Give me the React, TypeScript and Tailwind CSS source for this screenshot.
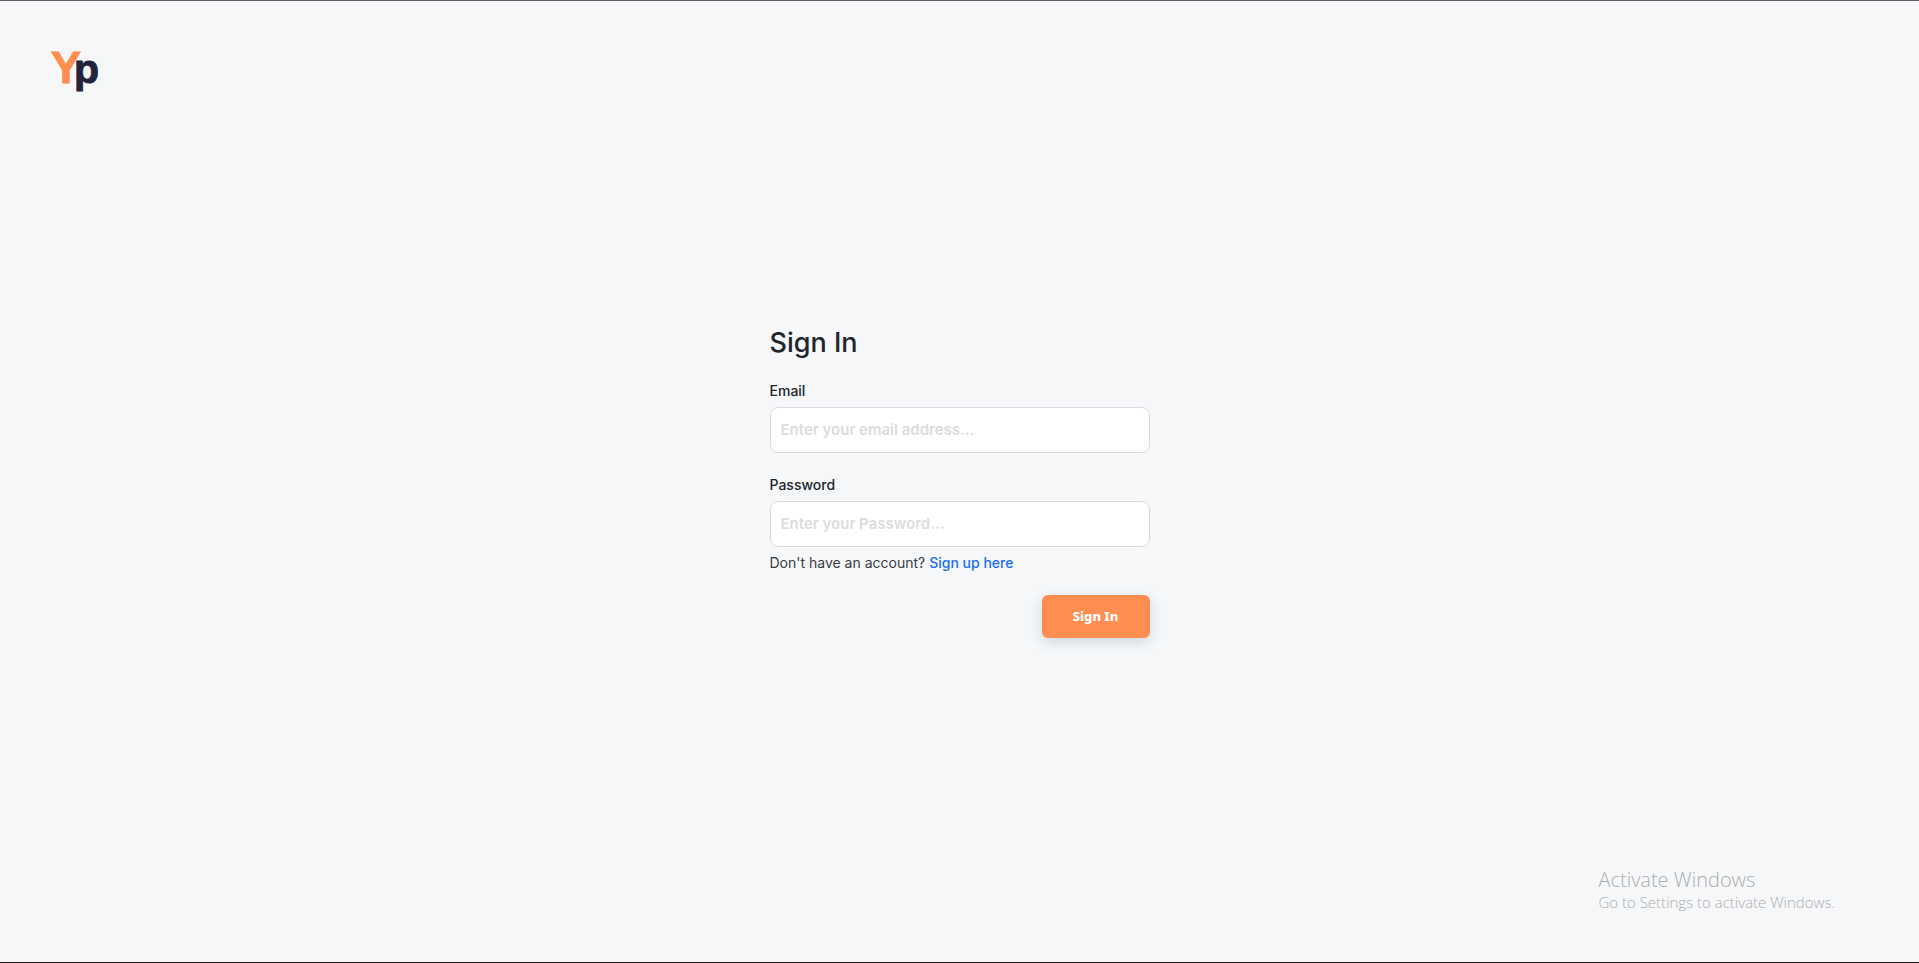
import React, { useState } from 'react';

interface FieldProps {
  id: string;
  label: string;
  type: string;
  placeholder: string;
  value: string;
  onChange: (value: string) => void;
}

const Logo: React.FC = () => (
  <a href="#" aria-label="Yp home" className="block w-fit">
    <svg
      viewBox="0 0 56 56"
      className="h-14 w-14 font-['Liberation_Sans',Arial,sans-serif] font-bold"
      aria-hidden="true"
    >
      <text x="3" y="42" fontSize="45" fill="#ff8e50" stroke="#ff8e50" strokeWidth="1">Y</text>
      <text x="26" y="42" fontSize="41" fill="#23233b" stroke="#23233b" strokeWidth="1">p</text>
    </svg>
  </a>
);

const Field: React.FC<FieldProps> = ({ id, label, type, placeholder, value, onChange }) => (
  <div className="mb-5 last:mb-0">
    <label htmlFor={id} className="mb-1 block text-sm font-medium leading-6 text-[#212529]">
      {label}
    </label>
    <input
      id={id}
      type={type}
      placeholder={placeholder}
      value={value}
      onChange={e => onChange(e.target.value)}
      className="block h-[46px] w-full rounded-lg border border-[#d9dbe0] bg-white px-2.5 pb-0.5 text-[15px] font-semibold text-[#212529] outline-none placeholder:text-[#dcdcdc] focus:border-[#ff8e50]"
    />
  </div>
);

const App: React.FC = () => {
  const [email, setEmail] = useState('');
  const [password, setPassword] = useState('');

  const handleSubmit = (e: React.FormEvent) => {
    e.preventDefault();
  };

  return (
    <div className="grid min-h-screen grid-rows-[1fr_auto_1fr] border-t border-b border-t-[#5f5f63] border-b-[#1f1a1e] bg-[#f5f7f9] font-['Inter',sans-serif]">
      <header className="px-12 py-10">
        <Logo />
      </header>

      <main className="flex justify-center px-4">
        <form onSubmit={handleSubmit} className="w-full max-w-[380px]">
          <h1 className="mb-[18px] text-[27px] font-medium leading-9 text-[#212529]">Sign In</h1>
          <div>
            <Field
              id="email"
              label="Email"
              type="email"
              placeholder="Enter your email address..."
              value={email}
              onChange={setEmail}
            />
            <Field
              id="password"
              label="Password"
              type="password"
              placeholder="Enter your Password..."
              value={password}
              onChange={setPassword}
            />
          </div>
          <p className="mt-1 text-sm leading-6 text-[#3a3d42]">
            Don't have an account?{' '}
            <a href="#" className="font-medium text-[#1a6df0]">Sign up here</a>
          </p>
          <div className="mt-5 flex justify-end">
            <button
              type="submit"
              className="h-[43px] w-[108px] rounded-md bg-[#ff8e50] font-['Noto_Sans','Open_Sans',sans-serif] text-[13px] font-extrabold text-white shadow-[0_4px_12px_rgba(60,90,110,0.2)]"
            >
              Sign In
            </button>
          </div>
        </form>
      </main>

      <footer className="flex items-end justify-end px-21 py-[50px] font-['Open_Sans','Noto_Sans',sans-serif] text-[#adaeb0]">
        <div>
          <p className="text-xl font-light leading-6">Activate Windows</p>
          <p className="text-[15px] font-light leading-5">Go to Settings to activate Windows.</p>
        </div>
      </footer>
    </div>
  );
};

export default App;
